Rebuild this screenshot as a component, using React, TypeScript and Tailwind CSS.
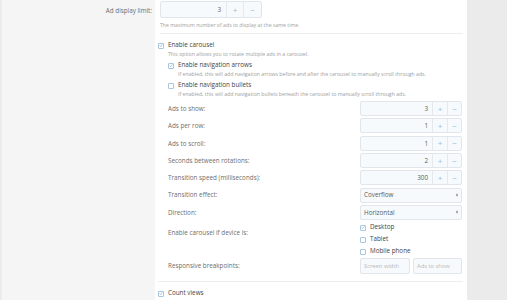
import * as React from "react"

const font = { fontFamily: '"Open Sans", "Liberation Sans", sans-serif' }

function Check({ checked }: { checked?: boolean }) {
    return (
        <span className="w-[6px] h-[6px] shrink-0 border border-[#a9c6df] bg-white rounded-[1px] flex items-center justify-center">
            {checked && (
                <svg viewBox="0 0 6 6" className="w-[5px] h-[5px]">
                    <path d="M1 3.2 L2.4 4.5 L5 1.5" fill="none" stroke="#4a97d4" strokeWidth="0.8" />
                </svg>
            )}
        </span>
    )
}

function CheckOption({ checked, label, hint, className }: { checked?: boolean; label: string; hint?: string; className?: string }) {
    return (
        <div className={className}>
            <div className="flex items-center gap-[4px] h-[9px]">
                <Check checked={checked} />
                <span className="text-[6.3px] text-[#444] leading-none">{label}</span>
            </div>
            {hint && <div className="pl-[10px] text-[5.2px] text-[#a0a0a0] leading-[8px]">{hint}</div>}
        </div>
    )
}

function NumberBox({ value }: { value: string }) {
    return (
        <div className="flex w-[102px] h-[15px] border border-[#e0e6eb] bg-[#f7fafc] rounded-[2px] text-[6.3px]">
            <div className="flex-1 flex items-center justify-end pr-[4px] text-[#5a5a5a]">{value}</div>
            <div className="w-[15px] border-l border-[#e4e9ee] flex items-center justify-center text-[#8fbde2] text-[8px]">+</div>
            <div className="w-[14px] border-l border-[#e4e9ee] flex items-center justify-center text-[#8fbde2] text-[8px]">−</div>
        </div>
    )
}

function SelectBox({ value }: { value: string }) {
    return (
        <div className="flex items-center justify-between w-[102px] h-[15px] border border-[#e0e6eb] bg-[#f7fafc] rounded-[2px] pl-[3px] pr-[3px] text-[6.3px] text-[#5a5a5a]">
            <span>{value}</span>
            <svg viewBox="0 0 4 6" className="w-[2px] h-[4px]">
                <path d="M0 2.5 L2 0 L4 2.5 Z M0 3.5 L2 6 L4 3.5 Z" fill="#666" />
            </svg>
        </div>
    )
}

function SubRow({ label, children }: { label: string; children: React.ReactNode }) {
    return (
        <div className="flex items-center justify-between h-[17.3px] pl-[10px] pr-[1px]">
            <span className="text-[6.3px] text-[#6e6e6e]">{label}</span>
            {children}
        </div>
    )
}

export default function App() {
    return (
        <div className="w-[507px] h-[300px] overflow-hidden flex bg-[#ebebeb] pl-[2px]" style={font}>
            <div className="w-[465px] flex flex-col">
                {/* Ad display limit */}
                <div className="flex h-[34px]">
                    <div className="w-[153px] bg-[#f5f5f5] text-right pr-[3px] pt-[6px] text-[6.3px] text-[#6e6e6e]">Ad display limit:</div>
                    <div className="flex-1 bg-white pl-[5px] pr-[4px] flex flex-col">
                        <div className="flex h-[17px] mt-[1px] w-[102px] border border-[#e0e6eb] bg-[#f7fafc] rounded-[2px] text-[6.3px]">
                            <div className="flex-1 flex items-center justify-end pr-[5px] text-[#5a5a5a]">3</div>
                            <div className="w-[17px] border-l border-[#e4e9ee] flex items-center justify-center text-[#8fbde2] text-[8px]">+</div>
                            <div className="w-[18px] border-l border-[#e4e9ee] flex items-center justify-center text-[#8fbde2] text-[8px]">−</div>
                        </div>
                        <div className="text-[5.2px] text-[#a0a0a0] mt-[3px] leading-[8px]">The maximum number of ads to display at the same time.</div>
                        <div className="mt-auto border-b border-[#ededed]" />
                    </div>
                </div>

                {/* Carousel */}
                <div className="flex h-[248px]">
                    <div className="w-[153px] bg-[#f5f5f5]" />
                    <div className="flex-1 bg-white pl-[3px] pr-[4px] flex flex-col">
                        <CheckOption className="mt-[7px]" checked label="Enable carousel" hint="This option allows you to rotate multiple ads in a carousel." />
                        <div className="pl-[10px]">
                            <CheckOption className="mt-[3px]" checked label="Enable navigation arrows" hint="If enabled, this will add navigation arrows before and after the carousel to manually scroll through ads." />
                            <CheckOption className="mt-[3px]" label="Enable navigation bullets" hint="If enabled, this will add navigation bullets beneath the carousel to manually scroll through ads." />
                        </div>
                        <div className="mt-[2px] flex flex-col">
                            <SubRow label="Ads to show:"><NumberBox value="3" /></SubRow>
                            <SubRow label="Ads per row:"><NumberBox value="1" /></SubRow>
                            <SubRow label="Ads to scroll:"><NumberBox value="1" /></SubRow>
                            <SubRow label="Seconds between rotations:"><NumberBox value="2" /></SubRow>
                            <SubRow label="Transition speed (milliseconds):"><NumberBox value="300" /></SubRow>
                            <SubRow label="Transition effect:"><SelectBox value="Coverflow" /></SubRow>
                            <SubRow label="Direction:"><SelectBox value="Horizontal" /></SubRow>
                        </div>
                        <div className="flex justify-between pl-[10px] pr-[1px] mt-[2px]">
                            <span className="text-[6.3px] text-[#6e6e6e] pt-[5px]">Enable carousel if device is:</span>
                            <div className="w-[102px] flex flex-col">
                                <CheckOption className="h-[12px]" checked label="Desktop" />
                                <CheckOption className="h-[12px]" label="Tablet" />
                                <CheckOption className="h-[12px]" label="Mobile phone" />
                            </div>
                        </div>
                        <div className="flex items-center justify-between pl-[10px] pr-[1px] -mt-[1px]">
                            <span className="text-[6.3px] text-[#6e6e6e]">Responsive breakpoints:</span>
                            <div className="flex gap-[3px] w-[102px]">
                                <div className="w-[50px] h-[16px] border border-[#e0e6eb] bg-[#f7fafc] rounded-[2px] text-[5.8px] text-[#b8b8b8] pl-[3px] flex items-center">Screen width</div>
                                <div className="w-[49px] h-[16px] border border-[#e0e6eb] bg-[#f7fafc] rounded-[2px] text-[5.8px] text-[#b8b8b8] pl-[3px] flex items-center">Ads to show</div>
                            </div>
                        </div>
                        <div className="mt-auto border-b border-[#ededed]" />
                    </div>
                </div>

                {/* Count views */}
                <div className="flex flex-1">
                    <div className="w-[153px] bg-[#f5f5f5]" />
                    <div className="flex-1 bg-white pl-[3px] pt-[7px]">
                        <CheckOption checked label="Count views" />
                    </div>
                </div>
            </div>
        </div>
    )
}
